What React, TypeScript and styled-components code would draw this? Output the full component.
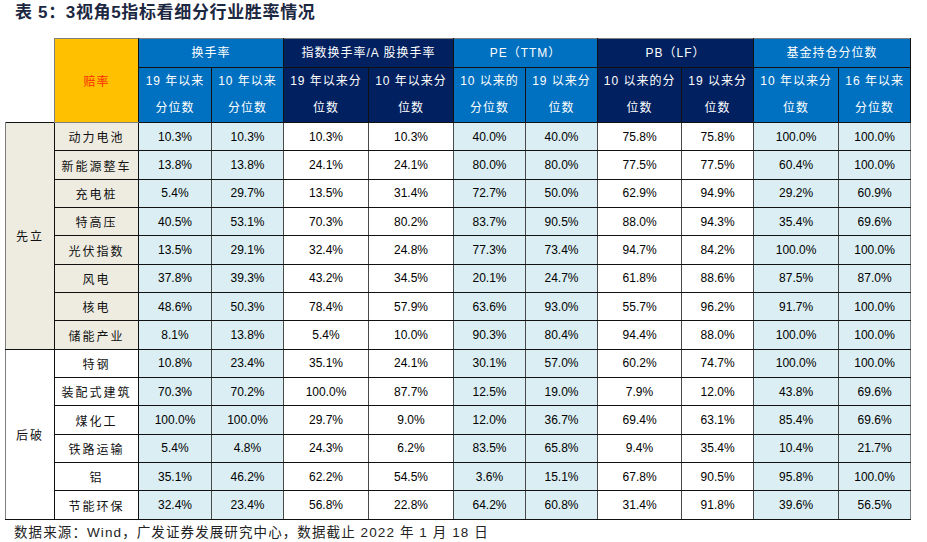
import React from "react";
import styled, { createGlobalStyle } from "styled-components";

const GlobalStyle = createGlobalStyle`
  body {
    margin: 0;
    background: #fff;
    font-family: "Liberation Sans", "Noto Sans CJK SC", sans-serif;
  }
`;

const Page = styled.div`
  width: 927px;
  height: 542px;
  padding: 3px 0 0 5px;
  box-sizing: border-box;
`;

const Title = styled.h1`
  margin: 0 0 15px 10px;
  font-family: "Liberation Sans", "Noto Sans CJK SC", sans-serif;
  font-size: 17px;
  line-height: 20px;
  font-weight: 700;
  letter-spacing: 0.65px;
  color: #1c2741;
`;

const Table = styled.table`
  border-collapse: collapse;
  table-layout: fixed;
  width: 905px;
`;

const HeadCell = styled.th<{ $bg: string; $tall?: boolean }>`
  background: ${(p) => p.$bg};
  color: #fff;
  font-weight: 400;
  font-size: 12px;
  letter-spacing: 1px;
  line-height: 27px;
  height: ${(p) => (p.$tall ? "54px" : "28px")};
  padding: 0;
  text-align: center;
  border: 1px solid #111;
  border-top-color: #7f7f7f;
`;

const OddsCell = styled.th`
  background: #ffc000;
  color: #ff2a00;
  font-weight: 400;
  font-size: 12px;
  letter-spacing: 1px;
  padding: 0;
  border: 1px solid #7f7f7f;
  border-right-color: #111;
`;

const Blank = styled.th`
  padding: 0;
  border: none;
  border-right: 1px solid #7f7f7f;
`;

const GroupCell = styled.td<{ $beige: boolean }>`
  background: ${(p) => (p.$beige ? "#eeece1" : "#fff")};
  font-size: 12px;
  letter-spacing: 2px;
  text-align: center;
  color: #111;
  padding: 0;
  border: 1px solid #111;
  border-left-color: #7f7f7f;
`;

const NameCell = styled.td<{ $beige: boolean }>`
  background: ${(p) => (p.$beige ? "#eeece1" : "#fff")};
  font-size: 12px;
  letter-spacing: 2px;
  text-align: center;
  color: #111;
  padding: 0;
  height: 27.35px;
  border: 1px solid #111;
`;

const DataCell = styled.td<{ $tint: boolean; $last?: boolean }>`
  background: ${(p) => (p.$tint ? "#daeef3" : "#fff")};
  font-size: 12px;
  text-align: center;
  color: #000;
  padding: 0;
  border-top: 1px solid #111;
  border-bottom: 1px solid #111;
  border-left: 1px solid #4a4a4a;
  border-right: 1px solid ${(p) => (p.$last ? "#7f7f7f" : "#4a4a4a")};
`;

const Source = styled.p`
  margin: 4px 0 0 9px;
  font-size: 13.5px;
  line-height: 18px;
  letter-spacing: 1.1px;
  color: #222;
`;

const BLUE = "#0070c0";
const NAVY = "#002060";

const groups = [
  { label: "换手率", bg: BLUE, subs: [["19 年以来", "分位数"], ["10 年以来", "分位数"]] },
  { label: "指数换手率/A 股换手率", bg: NAVY, subs: [["19 年以来分", "位数"], ["10 年以来分", "位数"]] },
  { label: "PE（TTM）", bg: BLUE, subs: [["10 以来的", "分位数"], ["19 以来分", "位数"]] },
  { label: "PB（LF）", bg: NAVY, subs: [["10 以来的分", "位数"], ["19 以来分", "位数"]] },
  { label: "基金持仓分位数", bg: BLUE, subs: [["10 年以来分", "位数"], ["16 年以来", "分位数"]] },
];

const tinted = [true, true, false, false, true, true, false, false, true, true];

const rows: [string, string[]][] = [
  ["动力电池", ["10.3%", "10.3%", "10.3%", "10.3%", "40.0%", "40.0%", "75.8%", "75.8%", "100.0%", "100.0%"]],
  ["新能源整车", ["13.8%", "13.8%", "24.1%", "24.1%", "80.0%", "80.0%", "77.5%", "77.5%", "60.4%", "100.0%"]],
  ["充电桩", ["5.4%", "29.7%", "13.5%", "31.4%", "72.7%", "50.0%", "62.9%", "94.9%", "29.2%", "60.9%"]],
  ["特高压", ["40.5%", "53.1%", "70.3%", "80.2%", "83.7%", "90.5%", "88.0%", "94.3%", "35.4%", "69.6%"]],
  ["光伏指数", ["13.5%", "29.1%", "32.4%", "24.8%", "77.3%", "73.4%", "94.7%", "84.2%", "100.0%", "100.0%"]],
  ["风电", ["37.8%", "39.3%", "43.2%", "34.5%", "20.1%", "24.7%", "61.8%", "88.6%", "87.5%", "87.0%"]],
  ["核电", ["48.6%", "50.3%", "78.4%", "57.9%", "63.6%", "93.0%", "55.7%", "96.2%", "91.7%", "100.0%"]],
  ["储能产业", ["8.1%", "13.8%", "5.4%", "10.0%", "90.3%", "80.4%", "94.4%", "88.0%", "100.0%", "100.0%"]],
  ["特钢", ["10.8%", "23.4%", "35.1%", "24.1%", "30.1%", "57.0%", "60.2%", "74.7%", "100.0%", "100.0%"]],
  ["装配式建筑", ["70.3%", "70.2%", "100.0%", "87.7%", "12.5%", "19.0%", "7.9%", "12.0%", "43.8%", "69.6%"]],
  ["煤化工", ["100.0%", "100.0%", "29.7%", "9.0%", "12.0%", "36.7%", "69.4%", "63.1%", "85.4%", "69.6%"]],
  ["铁路运输", ["5.4%", "4.8%", "24.3%", "6.2%", "83.5%", "65.8%", "9.4%", "35.4%", "10.4%", "21.7%"]],
  ["铝", ["35.1%", "46.2%", "62.2%", "54.5%", "3.6%", "15.1%", "67.8%", "90.5%", "95.8%", "100.0%"]],
  ["节能环保", ["32.4%", "23.4%", "56.8%", "22.8%", "64.2%", "60.8%", "31.4%", "91.8%", "39.6%", "56.5%"]],
];

const widths = [49, 84, 73, 72, 85, 85, 72, 72, 84, 72, 85, 72];

export default function App() {
  return (
    <Page>
      <GlobalStyle />
      <Title>表 5：3视角5指标看细分行业胜率情况</Title>
      <Table>
        <colgroup>
          {widths.map((w, i) => (
            <col key={i} style={{ width: w }} />
          ))}
        </colgroup>
        <thead>
          <tr>
            <Blank rowSpan={2} />
            <OddsCell rowSpan={2}>赔率</OddsCell>
            {groups.map((g) => (
              <HeadCell key={g.label} $bg={g.bg} colSpan={2}>
                {g.label}
              </HeadCell>
            ))}
          </tr>
          <tr>
            {groups.map((g) =>
              g.subs.map((s, i) => (
                <HeadCell key={g.label + i} $bg={g.bg} $tall>
                  {s[0]}
                  <br />
                  {s[1]}
                </HeadCell>
              ))
            )}
          </tr>
        </thead>
        <tbody>
          {rows.map(([name, vals], r) => (
            <tr key={name}>
              {r === 0 && (
                <GroupCell rowSpan={8} $beige>
                  先立
                </GroupCell>
              )}
              {r === 8 && (
                <GroupCell rowSpan={6} $beige={false}>
                  后破
                </GroupCell>
              )}
              <NameCell $beige={r < 8}>{name}</NameCell>
              {vals.map((v, i) => (
                <DataCell key={i} $tint={tinted[i]} $last={i === 9}>
                  {v}
                </DataCell>
              ))}
            </tr>
          ))}
        </tbody>
      </Table>
      <Source>数据来源：Wind，广发证券发展研究中心，数据截止 2022 年 1 月 18 日</Source>
    </Page>
  );
}
